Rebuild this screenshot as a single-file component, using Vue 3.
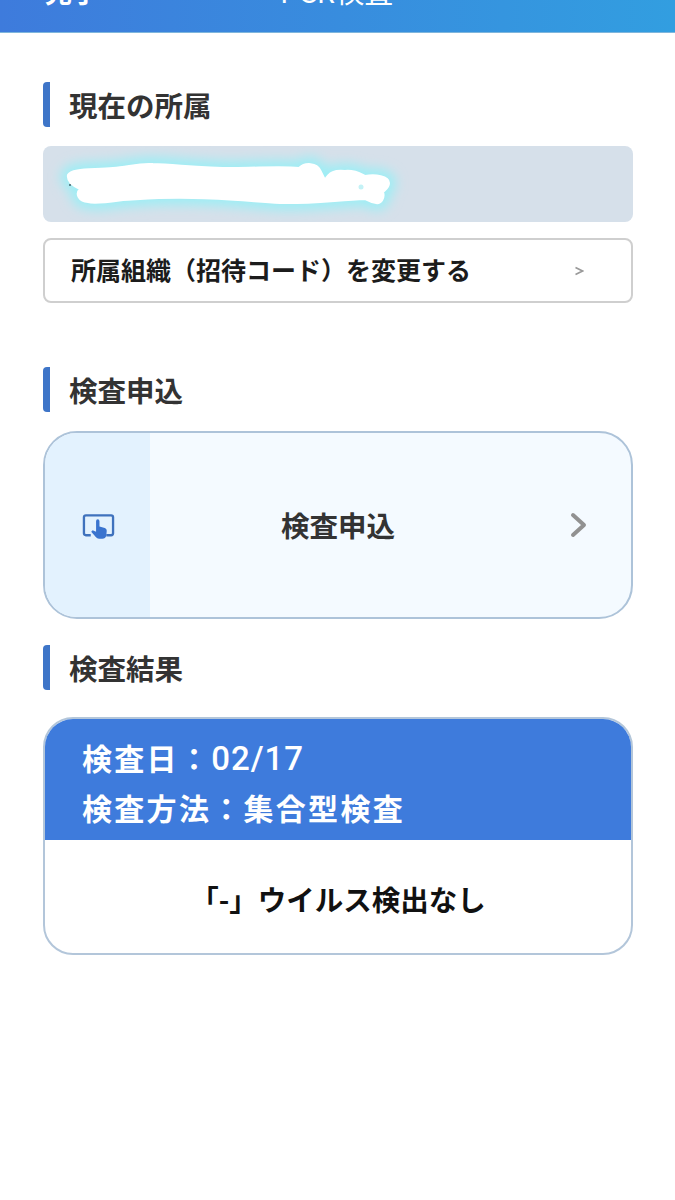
<script setup>
const sections = {
  affiliation: "現在の所属",
  apply: "検査申込",
  result: "検査結果",
};
const blob =
  "M25 29 C28 22 50 24 70 22 C85 21 95 17 110 18 C135 19 160 22 190 22 C215 22 240 20 256 22 C262 16 274 17 277 24 C279 28 281 32 282 34 C286 26 292 24 302 25 C312 24 318 28 322 30 C332 28 346 30 346 37 C346 42 342 44 340 46 C342 52 338 58 333 57 C328 57 325 54 322 53 C295 54 265 58 237 57 C205 55 180 52 150 52 C120 51 100 53 80 54 C65 56 52 58 45 56 C36 56 32 48 37 43 C30 40 24 35 25 29 Z";
</script>

<template>
  <div class="page">
    <header class="topBar">
      <span class="backLabel">完了</span>
      <span class="topTitle">PCR検査</span>
    </header>

    <main class="content">
      <h2 class="heading first">{{ sections.affiliation }}</h2>
      <div class="orgPanel">
        <svg class="scribble" width="590" height="76" viewBox="0 0 590 76">
          <defs>
            <filter id="glow" x="-10%" y="-60%" width="120%" height="220%">
              <feGaussianBlur stdDeviation="6" />
            </filter>
          </defs>
          <path class="glowShape" filter="url(#glow)" :d="blob" />
          <path class="whiteShape" :d="blob" />
          <circle class="speck" cx="318" cy="41" r="2.5" />
          <circle class="darkSpeck" cx="27" cy="39" r="1" />
        </svg>
      </div>
      <div class="changeButton">
        <span class="changeLabel">所属組織（招待コード）を変更する</span>
        <svg width="10" height="10" viewBox="0 0 10 10" class="smallChevron">
          <path d="M1.5 1.5 L8.5 5 L1.5 8.5" />
        </svg>
      </div>

      <h2 class="heading second">{{ sections.apply }}</h2>
      <div class="applyCard">
        <div class="applyIcon">
          <svg width="33" height="27" viewBox="0 0 34 27">
            <path class="screen" d="M9 22.5 H4 Q2 22.5 2 20.5 V4 Q2 2 4 2 H30 Q32 2 32 4 V20.5 Q32 22.5 30 22.5 H25" />
            <path class="hand" d="M14.5 8 Q14.5 6 16.2 6 Q18 6 18 8 V13.5 L23.5 15 Q25.5 15.6 25.5 18 L25 23 Q24.2 26 21 26 H17.5 Q15.5 26 14.2 24.4 L9.5 19 L11 17.4 L14.5 19 Z" />
          </svg>
        </div>
        <div class="applyBody">
          <span class="applyLabel">検査申込</span>
          <svg class="bigChevron" width="18" height="26" viewBox="0 0 18 26">
            <path d="M3 3 L14 13 L3 23" />
          </svg>
        </div>
      </div>

      <h2 class="heading third">{{ sections.result }}</h2>
      <div class="resultCard">
        <div class="resultHead">
          <p class="dateLine">検査日：<span class="date">02/17</span></p>
          <p>検査方法：集合型検査</p>
        </div>
        <div class="resultBody">「-」ウイルス検出なし</div>
      </div>
    </main>
  </div>
</template>

<style scoped>
.page {
  width: 675px;
  min-height: 1200px;
  background: #fff;
  font-family: "Noto Sans CJK JP", "Noto Sans", sans-serif;
}
.topBar {
  height: 33px;
  overflow: hidden;
  display: flex;
  align-items: flex-end;
  background: linear-gradient(90deg, #3e7bdc, #329ee0);
  border-bottom: 1px solid #7fb6dc;
  box-sizing: border-box;
  color: #fff;
  padding-left: 45px;
}
.backLabel {
  font-size: 27px;
  font-weight: 700;
  line-height: 40px;
  margin-bottom: 20px;
  flex: none;
}
.topTitle {
  font-size: 29px;
  line-height: 40px;
  margin-bottom: 22px;
  margin-left: 181px;
  flex: none;
}
.content {
  padding: 0 42px 0 43px;
}
.heading {
  margin: 0;
  height: 45px;
  border-left: 7px solid #3e75c8;
  border-radius: 4px;
  padding-left: 19px;
  font-size: 28.5px;
  font-weight: 700;
  line-height: 45px;
  color: #333;
}
.heading.first {
  margin-top: 49px;
}
.heading.second {
  margin-top: 64px;
}
.heading.third {
  margin-top: 26px;
}
.orgPanel {
  height: 76px;
  margin-top: 19px;
  background: #d6e0ea;
  border-radius: 8px;
}
.scribble {
  display: block;
}
.glowShape {
  fill: #9eeef5;
  stroke: #9eeef5;
  stroke-width: 14;
}
.whiteShape {
  fill: #fff;
  stroke: #fff;
  stroke-width: 2;
  stroke-linejoin: round;
}
.speck {
  fill: #c4f2f6;
}
.darkSpeck {
  fill: #44606a;
}
.changeButton {
  height: 65px;
  margin-top: 16px;
  box-sizing: border-box;
  border: 2px solid #cfcfcf;
  border-radius: 8px;
  display: flex;
  align-items: center;
  justify-content: space-between;
  padding: 0 47px 0 26px;
  font-size: 25px;
  font-weight: 700;
  color: #1c1c1c;
}
.changeLabel {
  padding-bottom: 4px;
}
.smallChevron path {
  fill: none;
  stroke: #999;
  stroke-width: 1.6;
}
.applyCard {
  height: 188px;
  margin-top: 19px;
  box-sizing: border-box;
  border: 2px solid #adc3d9;
  border-radius: 34px;
  overflow: hidden;
  display: flex;
  background: #f4faff;
}
.applyIcon {
  width: 105px;
  flex: none;
  background: #e3f2fe;
  display: flex;
  align-items: center;
  justify-content: center;
  padding: 2px 0 0 2px;
  box-sizing: border-box;
}
.screen {
  fill: none;
  stroke: #3f72bd;
  stroke-width: 2.4;
  stroke-linejoin: round;
}
.hand {
  fill: #3a74cf;
}
.applyBody {
  flex: 1;
  position: relative;
  display: flex;
  align-items: center;
  justify-content: center;
  padding: 0 105px 2px 0;
}
.applyLabel {
  font-size: 28.5px;
  font-weight: 700;
  color: #333;
}
.bigChevron {
  position: absolute;
  right: 43px;
  top: 79px;
}
.bigChevron path {
  fill: none;
  stroke: #919191;
  stroke-width: 4;
  stroke-linecap: round;
  stroke-linejoin: round;
}
.resultCard {
  height: 238px;
  margin-top: 27px;
  box-sizing: border-box;
  border: 2px solid #b3c6da;
  border-radius: 30px;
  overflow: hidden;
  background: #fff;
}
.resultHead {
  height: 121px;
  background: #3e7bdc;
  color: #fff;
  font-size: 30px;
  font-weight: 700;
  letter-spacing: 2.3px;
  padding: 14px 0 0 37px;
  box-sizing: border-box;
}
.resultHead p {
  margin: 0;
  line-height: 48px;
}
.date {
  font-family: Roboto, sans-serif;
  font-weight: 500;
  font-size: 33px;
  letter-spacing: 1px;
}
.resultBody {
  height: 113px;
  padding-top: 3px;
  box-sizing: border-box;
  display: flex;
  align-items: center;
  justify-content: center;
  font-size: 28.5px;
  font-weight: 700;
  color: #111;
}
</style>
